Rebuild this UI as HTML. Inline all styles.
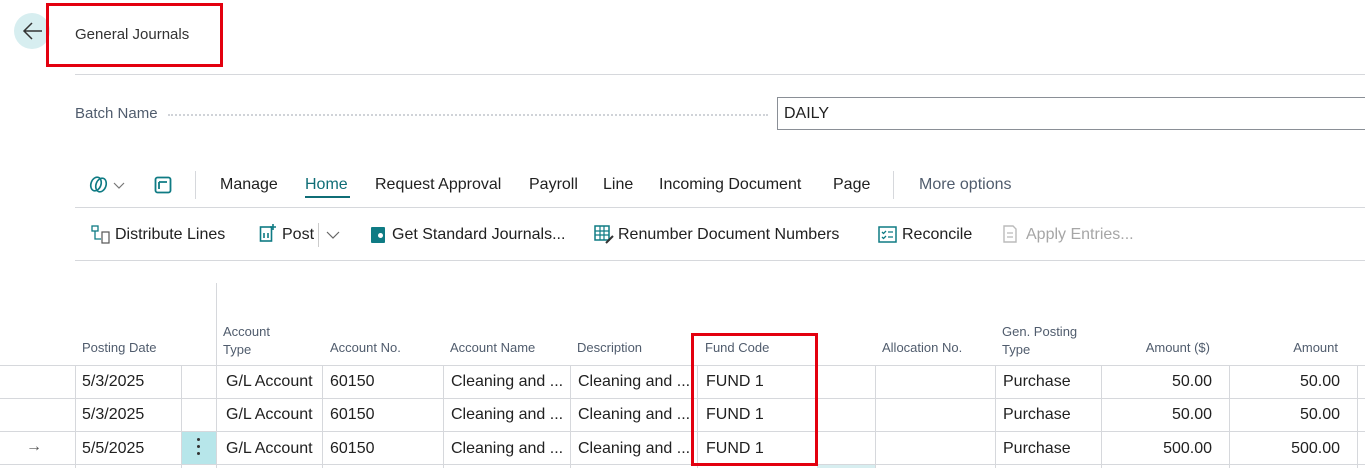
<!DOCTYPE html>
<html><head><meta charset="utf-8"><style>
*{margin:0;padding:0;box-sizing:border-box}
body{width:1365px;height:468px;background:#fff;font-family:"Liberation Sans",sans-serif;color:#212121;position:relative;overflow:hidden}
.a{position:absolute;white-space:nowrap}
.t{font-size:16px}
.h{font-size:13px;color:#505c6d}
.hl{position:absolute;height:1px;background:#d6d8dc}
.vl{position:absolute;width:1px;background:#d6d8dc}
.red{position:absolute;border:3px solid #e3000f}
</style></head><body>
<div class="a" style="left:14px;top:13px;width:36px;height:36px;border-radius:50%;background:#d7eef0"></div>
<svg class="a" style="left:22px;top:21px" width="22" height="20" viewBox="0 0 22 20"><path d="M20 10H3M10 2L2 10l8 8" fill="none" stroke="#333" stroke-width="1.5"/></svg>
<div class="a" style="left:75px;top:26px;font-size:15px;color:#333">General Journals</div>
<div class="red" style="left:46px;top:3px;width:177px;height:64px"></div>
<div class="hl" style="left:75px;top:74px;width:1290px"></div>
<div class="a" style="left:75px;top:105px;font-size:15px;color:#505c6d">Batch Name</div>
<div class="a" style="left:168px;top:114px;width:600px;border-top:2px dotted #d0d3d8"></div>
<div class="a" style="left:777px;top:97px;width:600px;height:33px;border:1px solid #8a8f96"></div>
<div class="a t" style="left:784px;top:105px">DAILY</div>
<svg class="a" style="left:88px;top:175px" width="42" height="20" viewBox="0 0 42 20"><ellipse cx="8" cy="9" rx="5" ry="7" fill="none" stroke="#0f7b84" stroke-width="1.6" transform="rotate(20 8 9)"/><ellipse cx="13" cy="10" rx="5" ry="7" fill="none" stroke="#0f7b84" stroke-width="1.6" transform="rotate(20 13 10)"/><path d="M26 8l5 5 5-5" fill="none" stroke="#777" stroke-width="1.2"/></svg>
<svg class="a" style="left:154px;top:176px" width="18" height="18" viewBox="0 0 18 18"><rect x="1.5" y="1.5" width="15" height="15" rx="2" fill="none" stroke="#0f7b84" stroke-width="1.8"/><path d="M5 6h8M5 6v7" stroke="#0f7b84" stroke-width="1.8"/></svg>
<div class="vl" style="left:195px;top:171px;height:28px"></div>
<div class="a t" style="left:220px;top:176px">Manage</div>
<div class="a t" style="left:305px;top:176px;color:#0f6d76">Home</div>
<div class="a" style="left:305px;top:196px;width:45px;height:2px;background:#0f6d76"></div>
<div class="a t" style="left:375px;top:176px">Request Approval</div>
<div class="a t" style="left:529px;top:176px">Payroll</div>
<div class="a t" style="left:603px;top:176px">Line</div>
<div class="a t" style="left:659px;top:176px">Incoming Document</div>
<div class="a t" style="left:833px;top:176px">Page</div>
<div class="vl" style="left:893px;top:171px;height:28px"></div>
<div class="a t" style="left:919px;top:176px;color:#505c6d">More options</div>
<div class="hl" style="left:75px;top:207px;width:1290px"></div>
<svg class="a" style="left:91px;top:225px" width="20" height="20" viewBox="0 0 20 20"><rect x="1" y="1" width="6" height="5" fill="none" stroke="#0f7b84" stroke-width="1.3"/><path d="M4 6v8h6" fill="none" stroke="#0f7b84" stroke-width="1.3"/><rect x="11" y="7" width="7" height="11" fill="none" stroke="#555" stroke-width="1.2"/></svg>
<div class="a t" style="left:115px;top:226px">Distribute Lines</div>
<svg class="a" style="left:259px;top:223px" width="18" height="20" viewBox="0 0 18 20"><rect x="1.5" y="4" width="11" height="14" fill="none" stroke="#0f7b84" stroke-width="1.6"/><path d="M14 1v6M11 4h6M5 10v5M9 10v5" stroke="#0f7b84" stroke-width="1.6"/></svg>
<div class="a t" style="left:282px;top:226px">Post</div>
<div class="vl" style="left:318px;top:223px;height:24px;background:#ccc"></div>
<svg class="a" style="left:325px;top:230px" width="16" height="10"><path d="M2 2l6 6 6-6" fill="none" stroke="#666" stroke-width="1.2"/></svg>
<div class="a" style="left:371px;top:227px;width:14px;height:16px;background:#0f7b84;border-radius:1px"></div>
<div class="a" style="left:378px;top:233px;width:5px;height:5px;border-radius:50%;background:#fff"></div>
<div class="a t" style="left:392px;top:226px">Get Standard Journals...</div>
<svg class="a" style="left:594px;top:225px" width="20" height="20" viewBox="0 0 20 20"><rect x="1" y="1" width="14" height="14" fill="none" stroke="#0f7b84" stroke-width="1.5"/><path d="M1 6h14M1 10h14M6 1v14M10 1v14" stroke="#0f7b84" stroke-width="1.2"/><path d="M12 18l7-7" stroke="#333" stroke-width="2"/></svg>
<div class="a t" style="left:618px;top:226px">Renumber Document Numbers</div>
<svg class="a" style="left:878px;top:225px" width="20" height="20" viewBox="0 0 20 20"><rect x="1" y="2" width="17" height="15" fill="none" stroke="#0f7b84" stroke-width="1.5"/><path d="M4 7l1.5 1.5L8 6M4 12l1.5 1.5L8 11M10 7h5M10 12h5" fill="none" stroke="#0f7b84" stroke-width="1.3"/></svg>
<div class="a t" style="left:902px;top:226px">Reconcile</div>
<svg class="a" style="left:1001px;top:224px" width="18" height="20" viewBox="0 0 18 20"><path d="M3 2h9l3 3v13H3z" fill="none" stroke="#bbb" stroke-width="1.4"/><path d="M6 9h6M6 13h6" stroke="#bbb" stroke-width="1.3"/></svg>
<div class="a t" style="left:1026px;top:226px;color:#a6a6a6">Apply Entries...</div>
<div class="hl" style="left:75px;top:260px;width:1290px"></div>
<div class="vl" style="left:216px;top:283px;height:82px"></div>
<div class="a h" style="left:82px;top:340px">Posting Date</div>
<div class="a h" style="left:223px;top:323px;line-height:18px">Account<br>Type</div>
<div class="a h" style="left:330px;top:340px">Account No.</div>
<div class="a h" style="left:450px;top:340px">Account Name</div>
<div class="a h" style="left:577px;top:340px">Description</div>
<div class="a h" style="left:705px;top:340px">Fund Code</div>
<div class="a h" style="left:882px;top:340px">Allocation No.</div>
<div class="a h" style="left:1002px;top:323px;line-height:18px">Gen. Posting<br>Type</div>
<div class="a h" style="left:1101px;top:340px;width:109px;text-align:right">Amount ($)</div>
<div class="a h" style="left:1229px;top:340px;width:109px;text-align:right">Amount</div>
<div class="hl" style="left:0;top:365px;width:1365px"></div>
<div class="hl" style="left:0;top:398px;width:1365px"></div>
<div class="hl" style="left:0;top:431px;width:1365px"></div>
<div class="hl" style="left:0;top:464px;width:1365px"></div>
<div class="a" style="left:182px;top:432px;width:34px;height:32px;background:#b7e6ea"></div>
<div class="a" style="left:817px;top:465px;width:58px;height:3px;background:#d7eef0"></div>
<div class="vl" style="left:75px;top:365px;height:103px"></div>
<div class="vl" style="left:181px;top:365px;height:103px"></div>
<div class="vl" style="left:216px;top:365px;height:103px"></div>
<div class="vl" style="left:322px;top:365px;height:103px"></div>
<div class="vl" style="left:443px;top:365px;height:103px"></div>
<div class="vl" style="left:570px;top:365px;height:103px"></div>
<div class="vl" style="left:697px;top:365px;height:103px"></div>
<div class="vl" style="left:875px;top:365px;height:103px"></div>
<div class="vl" style="left:995px;top:365px;height:103px"></div>
<div class="vl" style="left:1101px;top:365px;height:103px"></div>
<div class="vl" style="left:1229px;top:365px;height:103px"></div>
<div class="vl" style="left:1357px;top:365px;height:103px"></div>

<div class="a t" style="left:82px;top:373px">5/3/2025</div>
<div class="a t" style="left:82px;top:406px">5/3/2025</div>
<div class="a t" style="left:26px;top:438px;color:#555">→</div>
<div class="a t" style="left:82px;top:440px">5/5/2025</div>
<div class="a" style="left:197px;top:438px;width:3px;height:3px;background:#333;border-radius:50%;box-shadow:0 7px 0 #333,0 14px 0 #333"></div>
<div class="a t" style="left:226px;top:373px">G/L Account</div>
<div class="a t" style="left:226px;top:406px">G/L Account</div>
<div class="a t" style="left:226px;top:440px">G/L Account</div>
<div class="a t" style="left:330px;top:373px">60150</div>
<div class="a t" style="left:330px;top:406px">60150</div>
<div class="a t" style="left:330px;top:440px">60150</div>
<div class="a t" style="left:451px;top:373px">Cleaning and ...</div>
<div class="a t" style="left:451px;top:406px">Cleaning and ...</div>
<div class="a t" style="left:451px;top:440px">Cleaning and ...</div>
<div class="a t" style="left:578px;top:373px">Cleaning and ...</div>
<div class="a t" style="left:578px;top:406px">Cleaning and ...</div>
<div class="a t" style="left:578px;top:440px">Cleaning and ...</div>
<div class="a t" style="left:706px;top:373px">FUND 1</div>
<div class="a t" style="left:706px;top:406px">FUND 1</div>
<div class="a t" style="left:706px;top:440px">FUND 1</div>
<div class="a t" style="left:1003px;top:373px">Purchase</div>
<div class="a t" style="left:1003px;top:406px">Purchase</div>
<div class="a t" style="left:1003px;top:440px">Purchase</div>
<div class="a t" style="left:1101px;top:373px;width:111px;text-align:right">50.00</div>
<div class="a t" style="left:1101px;top:406px;width:111px;text-align:right">50.00</div>
<div class="a t" style="left:1101px;top:440px;width:111px;text-align:right">500.00</div>
<div class="a t" style="left:1229px;top:373px;width:111px;text-align:right">50.00</div>
<div class="a t" style="left:1229px;top:406px;width:111px;text-align:right">50.00</div>
<div class="a t" style="left:1229px;top:440px;width:111px;text-align:right">500.00</div>
<div class="red" style="left:691px;top:333px;width:127px;height:133px"></div>
</body></html>
